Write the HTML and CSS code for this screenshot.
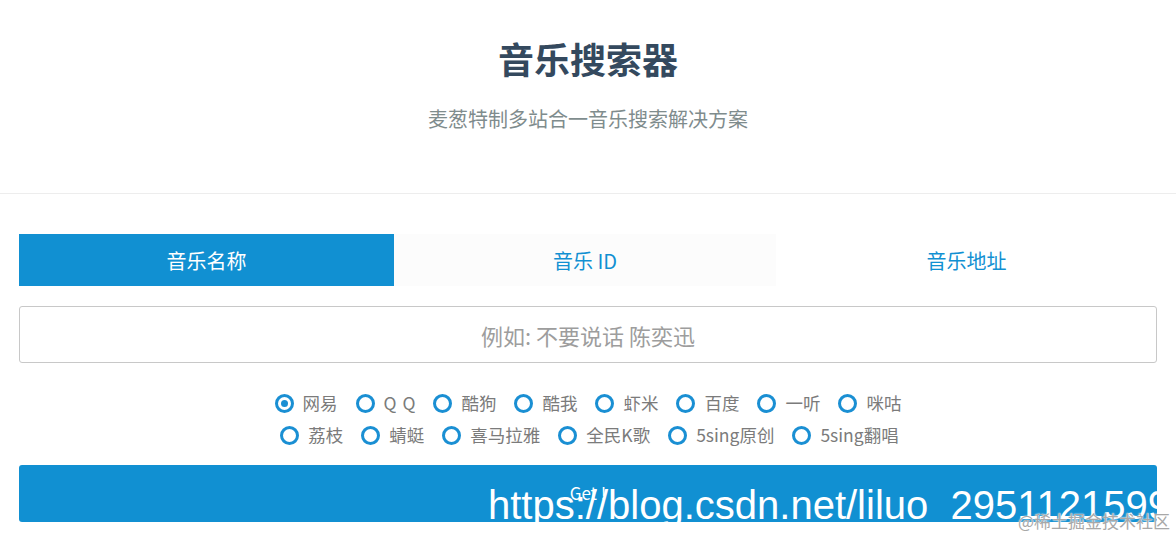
FILE: index.html
```html
<!DOCTYPE html>
<html lang="zh-CN">
<head>
<meta charset="utf-8">
<title>音乐搜索器</title>
<link rel="stylesheet" href="styles.css">
</head>
<body>
<header class="header">
  <h1 class="title">音乐搜索器</h1>
  <p class="subtitle">麦葱特制多站合一音乐搜索解决方案</p>
</header>
<main class="main">
  <nav class="tabs">
    <div class="tab active">音乐名称</div>
    <div class="tab light">音乐 ID</div>
    <div class="tab">音乐地址</div>
  </nav>
  <div class="search">
    <input class="search-input" type="text" placeholder="例如: 不要说话 陈奕迅">
  </div>
  <div class="sources">
    <div class="row">
      <label class="opt"><span class="radio checked"></span><span class="lbl">网易</span></label>
      <label class="opt"><span class="radio"></span><span class="lbl qq">QQ</span></label>
      <label class="opt"><span class="radio"></span><span class="lbl">酷狗</span></label>
      <label class="opt"><span class="radio"></span><span class="lbl">酷我</span></label>
      <label class="opt"><span class="radio"></span><span class="lbl">虾米</span></label>
      <label class="opt"><span class="radio"></span><span class="lbl">百度</span></label>
      <label class="opt"><span class="radio"></span><span class="lbl">一听</span></label>
      <label class="opt"><span class="radio"></span><span class="lbl">咪咕</span></label>
    </div>
    <div class="row">
      <label class="opt"><span class="radio"></span><span class="lbl">荔枝</span></label>
      <label class="opt"><span class="radio"></span><span class="lbl">蜻蜓</span></label>
      <label class="opt"><span class="radio"></span><span class="lbl">喜马拉雅</span></label>
      <label class="opt"><span class="radio"></span><span class="lbl">全民K歌</span></label>
      <label class="opt"><span class="radio"></span><span class="lbl">5sing原创</span></label>
      <label class="opt"><span class="radio"></span><span class="lbl">5sing翻唱</span></label>
    </div>
  </div>
  <button class="submit">Get !</button>
</main>
<div class="watermark">https://blog.csdn.net/liluo_2951121599</div>
<div class="juejin">@稀土掘金技术社区</div>
</body>
</html>
```

FILE: styles.css
```css
html, body {
  margin: 0;
  padding: 0;
  height: 538px;
  overflow: hidden;
}
body {
  position: relative;
  background: #fff;
  font-family: "Noto Sans CJK SC", "Noto Sans", sans-serif;
}
.header {
  padding: 36px 0 60px;
  border-bottom: 1px solid #ededed;
  text-align: center;
}
.title {
  margin: 0;
  font-size: 36px;
  line-height: 44px;
  font-weight: 700;
  color: #34495e;
}
.subtitle {
  margin: 25px 0 0;
  font-size: 20px;
  line-height: 28px;
  color: #7f8c8d;
}
.main {
  padding: 40px 19px 0;
}
.tabs {
  display: grid;
  grid-template-columns: 375px 382px 1fr;
  height: 52px;
}
.tab {
  display: flex;
  align-items: center;
  justify-content: center;
  font-size: 20px;
  color: #1190d2;
}
.tab.active {
  background: #1190d2;
  color: #fff;
}
.tab.light {
  background: #fcfcfc;
}
.search {
  margin-top: 20px;
}
.search-input {
  display: block;
  box-sizing: border-box;
  width: 100%;
  height: 57px;
  border: 1px solid #c8c8c8;
  border-radius: 3px;
  text-align: center;
  font-family: "Noto Sans CJK SC", sans-serif;
  font-size: 22px;
  outline: none;
}
.search-input::placeholder {
  color: #9d9d9d;
}
.sources {
  margin-top: 24px;
}
.row {
  display: flex;
  justify-content: center;
  gap: 18px;
  height: 32px;
  align-items: center;
}
.row + .row {
  padding-left: 3px;
}
.opt {
  display: flex;
  align-items: center;
  gap: 9px;
}
.radio {
  position: relative;
  box-sizing: border-box;
  width: 19px;
  height: 19px;
  border: 3px solid #1a8fd3;
  border-radius: 50%;
}
.radio.checked::after {
  content: "";
  position: absolute;
  left: 3px;
  top: 3px;
  width: 7px;
  height: 7px;
  border-radius: 50%;
  background: #1a8fd3;
}
.lbl {
  font-size: 17.5px;
  color: #7b7b7b;
  line-height: 24px;
}
.lbl.qq {
  letter-spacing: 6px;
  margin-right: -6px;
}
.submit {
  display: block;
  margin-top: 14px;
  width: 100%;
  height: 57px;
  border: 0;
  border-radius: 3px;
  background: #1190d2;
  color: #fff;
  font-family: "Noto Sans CJK SC", sans-serif;
  font-size: 17px;
  padding-bottom: 3px;
}
.watermark {
  position: absolute;
  left: 488px;
  top: 485px;
  font-family: "Liberation Sans", Arial, sans-serif;
  font-size: 40px;
  line-height: 40px;
  color: #fff;
  white-space: nowrap;
}
.juejin {
  position: absolute;
  right: 6px;
  top: 509px;
  font-family: "Noto Sans CJK SC", sans-serif;
  font-size: 17px;
  line-height: 24px;
  color: #a8a8a8;
  text-shadow: 0 0 2px #fff, 0 0 1px #fff;
  white-space: nowrap;
}
```
